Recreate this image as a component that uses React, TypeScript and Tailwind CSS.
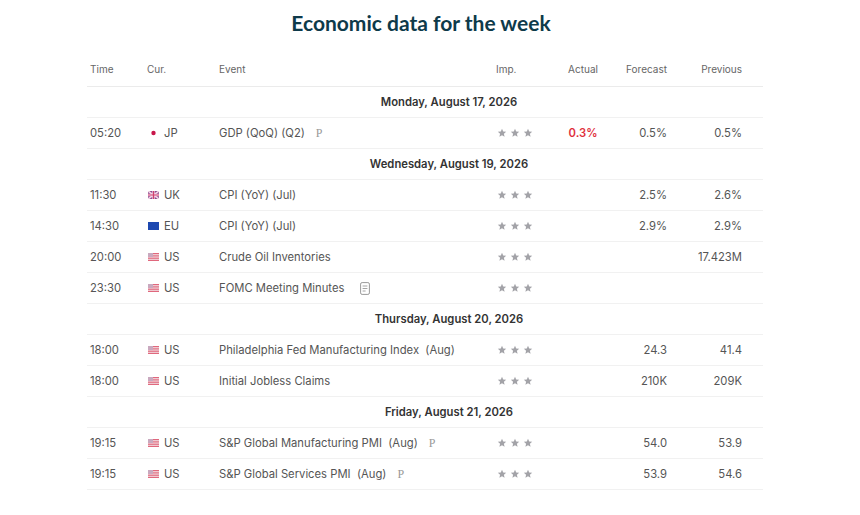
import React from 'react';

type Row = {
  time: string;
  cur: 'JP' | 'UK' | 'EU' | 'US';
  event: string;
  prelim?: boolean;
  doc?: boolean;
  actual?: string;
  forecast?: string;
  previous?: string;
};

type Day = { label: string; rows: Row[] };

const days: Day[] = [
  {
    label: 'Monday, August 17, 2026',
    rows: [{ time: '05:20', cur: 'JP', event: 'GDP (QoQ) (Q2)', prelim: true, actual: '0.3%', forecast: '0.5%', previous: '0.5%' }],
  },
  {
    label: 'Wednesday, August 19, 2026',
    rows: [
      { time: '11:30', cur: 'UK', event: 'CPI (YoY) (Jul)', forecast: '2.5%', previous: '2.6%' },
      { time: '14:30', cur: 'EU', event: 'CPI (YoY) (Jul)', forecast: '2.9%', previous: '2.9%' },
      { time: '20:00', cur: 'US', event: 'Crude Oil Inventories', previous: '17.423M' },
      { time: '23:30', cur: 'US', event: 'FOMC Meeting Minutes', doc: true },
    ],
  },
  {
    label: 'Thursday, August 20, 2026',
    rows: [
      { time: '18:00', cur: 'US', event: 'Philadelphia Fed Manufacturing Index\u00a0 (Aug)', forecast: '24.3', previous: '41.4' },
      { time: '18:00', cur: 'US', event: 'Initial Jobless Claims', forecast: '210K', previous: '209K' },
    ],
  },
  {
    label: 'Friday, August 21, 2026',
    rows: [
      { time: '19:15', cur: 'US', event: 'S&P Global Manufacturing PMI\u00a0 (Aug)', prelim: true, forecast: '54.0', previous: '53.9' },
      { time: '19:15', cur: 'US', event: 'S&P Global Services PMI\u00a0 (Aug)', prelim: true, forecast: '53.9', previous: '54.6' },
    ],
  },
];

const cols = 'grid grid-cols-[60px_72px_277px_64px_46px_61px_75px_21px] items-center';

function Flag({ cur }: { cur: Row['cur'] }) {
  if (cur === 'JP')
    return (
      <svg width="11" height="8" viewBox="0 0 11 8">
        <rect width="11" height="8" fill="#fff" />
        <circle cx="5.5" cy="4" r="2.2" fill="#c8164a" />
      </svg>
    );
  if (cur === 'EU')
    return (
      <svg width="11" height="8" viewBox="0 0 11 8">
        <rect width="11" height="8" fill="#1d48b0" />
      </svg>
    );
  if (cur === 'UK')
    return (
      <svg width="11" height="8" viewBox="0 0 11 8">
        <rect width="11" height="8" fill="#8a4a8e" />
        <path d="M0 0L11 8M11 0L0 8" stroke="#f4d4e6" strokeWidth="1.6" />
        <path d="M5.5 0V8M0 4H11" stroke="#f4d4e6" strokeWidth="2.4" />
        <path d="M5.5 0V8M0 4H11" stroke="#d0406e" strokeWidth="1.2" />
      </svg>
    );
  return (
    <svg width="11" height="8" viewBox="0 0 11 8">
      <rect width="11" height="8" fill="#f3e3e7" />
      <rect y="0" width="11" height="1.2" fill="#e0687d" />
      <rect y="2.3" width="11" height="1.2" fill="#e0687d" />
      <rect y="4.6" width="11" height="1.2" fill="#e0687d" />
      <rect y="6.8" width="11" height="1.2" fill="#e0687d" />
      <rect width="5" height="4" fill="#c9a9bf" />
    </svg>
  );
}

function Stars() {
  return (
    <div className="flex gap-[3px] pl-[1px]">
      {[0, 1, 2].map(i => (
        <svg key={i} width="10" height="10" viewBox="0 0 24 24">
          <path d="M12 2l2.9 6.6 7.1.6-5.4 4.7 1.6 7-6.2-3.7-6.2 3.7 1.6-7L2 9.2l7.1-.6z" fill="#a3a3a8" />
        </svg>
      ))}
    </div>
  );
}

function DocIcon() {
  return (
    <svg width="10" height="13" viewBox="0 0 10 13" className="ml-[16px]">
      <rect x="0.6" y="0.6" width="8.8" height="11.8" rx="1.5" fill="none" stroke="#9a9a9a" strokeWidth="1" />
      <path d="M2.6 4H7.4M2.6 6.5H7.4M2.6 9H5.6" stroke="#9a9a9a" strokeWidth="0.9" />
    </svg>
  );
}

export default function App() {
  return (
    <div className="w-[860px] h-[515px] bg-white overflow-hidden" style={{ fontFamily: 'Inter, "Liberation Sans", sans-serif' }}>
      <h1
        className="pt-[7px] pr-[18px] h-[53px] text-center text-[21px] font-bold text-[#0e3a4a]"
        style={{ fontFamily: 'Lato, "Open Sans", sans-serif' }}
      >
        Economic data for the week
      </h1>

      <div className="ml-[87px] w-[676px] text-[11.25px] text-[#555]">
        {/* header */}
        <div className={`${cols} h-[34px] border-b border-[#ebebeb] text-[10px] text-[#666]`}>
          <div className="pl-[3px]">Time</div>
          <div>Cur.</div>
          <div>Event</div>
          <div>Imp.</div>
          <div className="text-center">Actual</div>
          <div className="text-right">Forecast</div>
          <div className="text-right">Previous</div>
          <div />
        </div>

        {days.map(d => (
          <div key={d.label}>
            <div className="h-[31px] border-b border-[#f1f1f1] pl-[48px] flex items-center justify-center font-semibold text-[#333]">
              {d.label}
            </div>
            {d.rows.map((r, i) => (
              <div key={i} className={`${cols} h-[31px] border-b border-[#f1f1f1]`}>
                <div className="pl-[3px]">{r.time}</div>
                <div className="flex items-center gap-[5px] pl-[1px]">
                  <Flag cur={r.cur} />
                  <span>{r.cur}</span>
                </div>
                <div className="flex items-center whitespace-nowrap">
                  <span>{r.event}</span>
                  {r.prelim && (
                    <span className="ml-[11px] text-[12px] text-[#999]" style={{ fontFamily: '"Liberation Serif", serif' }}>
                      P
                    </span>
                  )}
                  {r.doc && <DocIcon />}
                </div>
                <Stars />
                <div className="text-center font-semibold text-[#e0303c]">{r.actual}</div>
                <div className="text-right">{r.forecast}</div>
                <div className="text-right">{r.previous}</div>
                <div />
              </div>
            ))}
          </div>
        ))}
      </div>
    </div>
  );
}
